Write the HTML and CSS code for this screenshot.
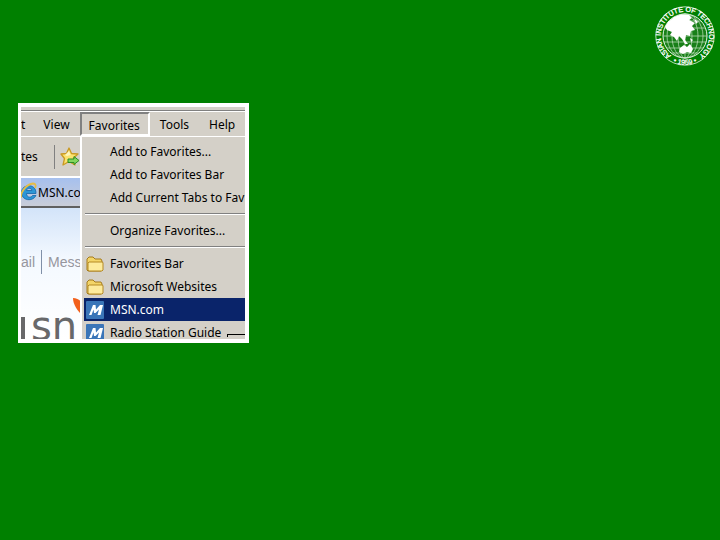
FILE: index.html
```
<!DOCTYPE html>
<html lang="en">

<head>
    <meta charset="utf-8">
    <meta name="viewport" content="width=device-width, initial-scale=1">
    <title>Favorites menu</title>
    <link rel="stylesheet" href="styles.css">
</head>

<body>
    <header class="slide-header">
        <svg class="seal" viewBox="0 0 60 60" role="img" aria-label="Asian Institute of Technology 1959">
            <defs>
                <path id="ring" d="M14.500 48.500 A24.2 24.2 0 1 1 45.500 48.500" />
                <path id="ring-bottom" d="M17 55.5 A28.5 28.5 0 0 0 43 55.5" />
            </defs>
            <circle cx="30" cy="30" r="29.2" fill="none" stroke="#e8f5e6" stroke-width="0.8" />
            <circle cx="30" cy="30" r="22" fill="#187f18" stroke="#e8f5e6" stroke-width="1" />
            <g fill="none" stroke="#c4e2c2" stroke-width="0.7">
                <ellipse cx="30" cy="30" rx="7" ry="22" />
                <ellipse cx="30" cy="30" rx="13" ry="22" />
                <ellipse cx="30" cy="30" rx="18" ry="22" />
                <path d="M30 8V52M8 30H52M10 22H50M14 15H46M9 36H51M12 42H48M17 47H43" />
            </g>
            <path fill="#fff" d="M13 16L19 11L26 8.500L34 9L37 12L34 14L40 17L37 20L40 24L36 25L35 30L31 29L30 34L33 38L30 38L27 33L24 30L22 35L19 31L15 29L17 26L12 24L10 21Z" />
            <path fill="#fff" d="M25 42L29 39L32 41L35 38L38 43L36 47L32 46L28 48L24 46ZM35 32L38 34L36 36ZM39 12L43 16L41 18Z" />
            <g class="seal-text">
                <text text-anchor="middle"><textPath href="#ring" startOffset="50%">ASIAN INSTITUTE OF TECHNOLOGY</textPath></text>
                <text text-anchor="middle"><textPath href="#ring-bottom" startOffset="50%">• 1959 •</textPath></text>
            </g>
        </svg>
    </header>

    <main class="slide-body">
        <div class="frame">
            <div class="browser">
                <div class="title-strip"></div>
                <nav class="menu-bar">
                    <button class="menu-button cut" type="button">t</button>
                    <button class="menu-button" type="button">View</button>
                    <button class="menu-button open" type="button" aria-expanded="true">Favorites</button>
                    <button class="menu-button" type="button">Tools</button>
                    <button class="menu-button" type="button">Help</button>
                </nav>
                <div class="toolbar">
                    <button class="tool-button" type="button">tes</button>
                    <button class="tool-button add" type="button" aria-label="Add to Favorites Bar">
                        <svg width="20" height="20" viewBox="0 0 20 20">
                            <path d="M9 1L11.500 6.500L18 7L13.500 11L15 18L9 14.500L3 18L4.500 11.500L1 7L6.500 6.500Z" fill="#fbe36e" stroke="#c99a24" stroke-width="1.300" stroke-linejoin="round" />
                            <path d="M9 4L10.500 8L7 9L5 8Z" fill="#fff6bf" />
                            <path d="M8 12H14V9.500L19 13.500L14 17.500V15.500H8Z" fill="#83d65c" stroke="#2b8f25" />
                        </svg>
                    </button>
                </div>
                <div class="tab-bar">
                    <svg width="16" height="20" viewBox="0 0 16 20">
                        <path d="M15 11.500H5.500C5.500 16 10.500 16 11.500 13.500H15C12 20 0.500 19 0.500 10.500C0.500 1.500 15.500 1 15 11.500ZM5.500 8.500H10.800C10.300 5.500 6 5.500 5.500 8.500Z" fill="#2d96d6" stroke="#1464a8" stroke-width="0.800" fill-rule="evenodd" />
                        <path d="M0 16C-1 10 6 2 12 1.500C15 1.500 15 4 14 6" fill="none" stroke="#e5bd46" stroke-width="1.800" />
                    </svg>
                    <a class="tab" href="#">MSN.co</a>
                </div>
                <div class="page">
                    <div class="page-links">
                        <a href="#">ail</a>
                        <a class="messenger" href="#">Mess</a>
                    </div>
                    <div class="msn-logo">
                        <svg class="wing" width="8" height="16" viewBox="0 0 8 16">
                            <path d="M0 0C3 0 6 1 8 4V16C5 13 0 7 0 0Z" fill="#f2601c" />
                        </svg>
                        <span class="wordmark">sn</span>
                    </div>
                </div>

                <ul class="favorites-menu">
                    <li><button class="item" type="button">Add to Favorites...</button></li>
                    <li><button class="item" type="button">Add to Favorites Bar</button></li>
                    <li><button class="item" type="button">Add Current Tabs to Fav</button></li>
                    <li class="separator"></li>
                    <li><button class="item" type="button">Organize Favorites...</button></li>
                    <li class="separator"></li>
                    <li>
                        <button class="item with-icon" type="button">
                            <svg width="18" height="18" viewBox="0 0 18 18">
                                <path d="M1 15V4L3 2H7L9 4H15L16 6V15L15 16H2Z" fill="#f3d568" stroke="#a57a1c" />
                                <path d="M3 7H16.500L17 8V15L16 16H3L2 15V8Z" fill="#fdeb9c" stroke="#b58a25" />
                            </svg>
                            Favorites Bar
                        </button>
                    </li>
                    <li>
                        <button class="item with-icon" type="button">
                            <svg width="18" height="18" viewBox="0 0 18 18">
                                <path d="M1 15V4L3 2H7L9 4H15L16 6V15L15 16H2Z" fill="#f3d568" stroke="#a57a1c" />
                                <path d="M3 7H16.500L17 8V15L16 16H3L2 15V8Z" fill="#fdeb9c" stroke="#b58a25" />
                            </svg>
                            Microsoft Websites
                        </button>
                    </li>
                    <li>
                        <button class="item with-icon selected" type="button">
                            <svg width="18" height="18" viewBox="0 0 18 18">
                                <rect width="18" height="18" rx="1" fill="#3a75b8" />
                                <path d="M3 14L7 4H9.500L10 8.500L14 4H17L14.500 14H11.500L13 8.500L9.500 12H8L7.500 8.500L5.500 14Z" fill="#fff" />
                            </svg>
                            MSN.com
                        </button>
                    </li>
                    <li>
                        <button class="item with-icon" type="button">
                            <svg width="18" height="18" viewBox="0 0 18 18">
                                <rect width="18" height="18" rx="1" fill="#3a75b8" />
                                <path d="M3 14L7 4H9.500L10 8.500L14 4H17L14.500 14H11.500L13 8.500L9.500 12H8L7.500 8.500L5.500 14Z" fill="#fff" />
                            </svg>
                            Radio Station Guide
                            <span class="corner"></span>
                        </button>
                    </li>
                </ul>
            </div>
        </div>
    </main>
</body>

</html>
```
FILE: styles.css
```
* {
    box-sizing: border-box;
}

body {
    margin: 0;
    min-height: 100vh;
    background-color: #008000;
    font-family: "Noto Sans", "DejaVu Sans Condensed", sans-serif;
    font-size: 12px;
    color: #000;
}

button {
    margin: 0;
    padding: 0;
    border: none;
    background: none;
    color: inherit;
    font: inherit;
    white-space: nowrap;
}

a {
    color: inherit;
    text-decoration: none;
}

svg {
    display: block;
    flex: none;
}

.slide-header {
    display: flex;
    justify-content: flex-end;
    padding: 6px 5px 0 0;
}

.seal {
    width: 60px;
    height: 60px;
}

.seal-text {
    fill: #fff;
    stroke: #fff;
    stroke-width: 0.3;
    font-family: "Liberation Sans", Arial, sans-serif;
    font-size: 7px;
}

.slide-body {
    padding: 37px 18px;
}

.frame {
    width: 32%;
    min-width: 231px;
    padding: 4px 4px 4px 3px;
    background-color: #fff;
}

/* browser window */
.browser {
    position: relative;
    overflow: hidden;
    height: 232px;
    background-color: #d4d0c8;
}

.title-strip {
    height: 5px;
    border-bottom: 1px solid #fff;
    box-shadow: inset 0 -1px #808080;
}

.menu-bar {
    display: flex;
    height: 25px;
    border-bottom: 1px solid #fff;
}

.menu-button {
    padding: 0 10px;
}

.menu-button.cut {
    padding: 0 8px 0 0;
}

.menu-button.open {
    padding: 2px 8px 0 7px;
    border: 2px solid #808080;
    border-right-color: #fff;
    border-bottom-color: #fff;
}

.toolbar {
    display: flex;
    align-items: center;
    gap: 16px;
    height: 41px;
    border-bottom: 2px solid #fff;
}

.tool-button.add {
    padding: 2px 0 2px 5px;
    border-left: 1px solid #808080;
}

/* page behind the menu */
.tab-bar {
    display: flex;
    align-items: center;
    gap: 1px;
    height: 30px;
    background: linear-gradient(#a6c0ee, #c9cdd8);
    border-bottom: 2px solid #606060;
}

.page {
    height: 131px;
    padding-top: 42px;
    background: linear-gradient(#d3e4f9, #f4f9ff 40%, #fff);
    overflow: hidden;
}

.page-links {
    display: flex;
    gap: 6px;
    color: #96969e;
    font-family: "Liberation Sans", Arial, sans-serif;
    font-size: 14px;
    line-height: 24px;
}

.messenger {
    padding-left: 6px;
    border-left: 1px solid #8090a8;
}

.msn-logo {
    padding-top: 24px;
    color: #68686a;
    font-family: "DejaVu Sans", sans-serif;
    font-size: 40px;
    line-height: 18px;
}

.msn-logo .wing {
    margin-left: 52px;
}

/* the left border is the last stem of the m */
.wordmark {
    display: block;
    height: 22px;
    margin-top: 3px;
    padding-left: 6px;
    border-left: 4px solid #68686a;
}

/* open menu, drawn over the page */
.favorites-menu {
    position: absolute;
    top: 29px;
    left: 59px;
    right: 0;
    margin: 0;
    padding: 3px 0 0 2px;
    list-style: none;
    background-color: #d4d0c8;
    border-top: 1px solid #fff;
    border-left: 2px solid #fff;
}

.item {
    display: flex;
    align-items: center;
    gap: 6px;
    width: 100%;
    height: 23px;
    padding-left: 26px;
    text-align: left;
}

.item.with-icon {
    padding-left: 2px;
}

.item.selected {
    background-color: #0a246a;
    color: #fff;
}

.separator {
    height: 10px;
    padding: 4px 0 0 1px;
}

.separator::before {
    content: "";
    display: block;
    height: 1px;
    background-color: #808080;
    border-bottom: 1px solid #fff;
}

.corner {
    flex: 1;
    height: 3px;
    margin-top: 6px;
    border-top: 1px solid #000;
    border-left: 1px solid #000;
}
```
